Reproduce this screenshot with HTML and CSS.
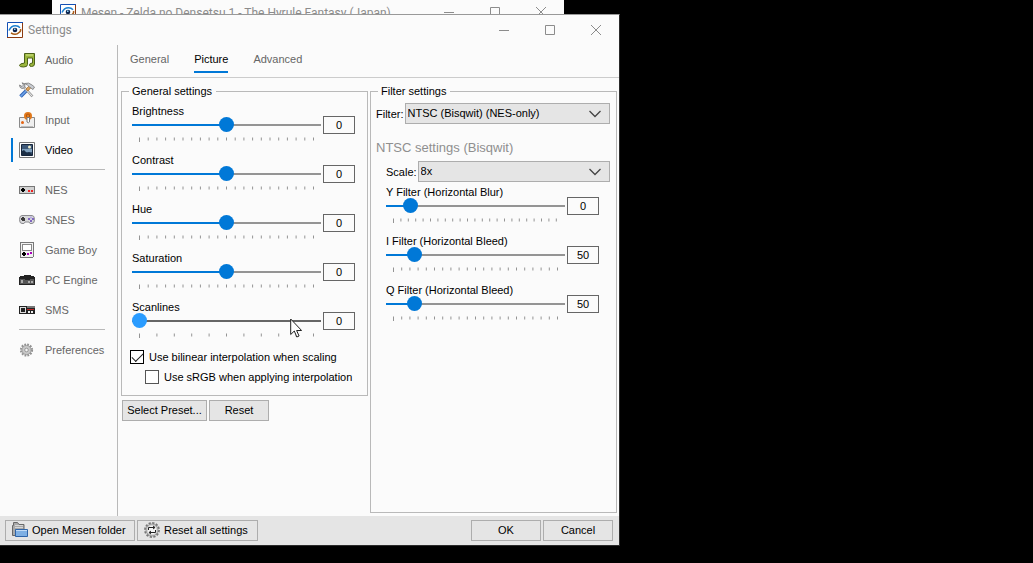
FILE: index.html
```html
<!DOCTYPE html>
<html lang="en">
<head>
<meta charset="utf-8">
<title>Settings</title>
<link rel="stylesheet" href="styles.css">
</head>
<body>
<svg class="defs" aria-hidden="true">
  <symbol id="eye" viewBox="0 0 16 16">
    <path fill="#fff" d="M0 0h16v16H0z"/>
    <path fill="none" stroke="#1450b4" d="M.5 16V.5H16"/>
    <path fill="none" stroke="#8c3a10" d="M0 15.500h15.500V1"/>
    <path fill="none" stroke="#1a7fd0" stroke-width="1.500" d="M2 8.500C3.500 5 6 3.800 8.500 3.800c2 0 3.500.8 4.500 2"/>
    <path fill="none" stroke="#a85a14" stroke-width="1.500" d="M4 11c3 1.800 6 1.600 8-.5C13.500 9.500 14 8.500 13.500 7"/>
    <circle cx="8" cy="8" r="2.300" fill="#0c2450"/>
    <path fill="#8ed3f8" d="M7 6.500h1.500V8H7z"/>
  </symbol>
  <symbol id="min" viewBox="0 0 10 10"><path stroke="currentColor" d="M0 5.500h10"/></symbol>
  <symbol id="max" viewBox="0 0 10 10"><path fill="none" stroke="currentColor" d="M.5.5h9v9h-9z"/></symbol>
  <symbol id="close" viewBox="0 0 10 10"><path stroke="currentColor" d="M0 0l10 10M10 0L0 10"/></symbol>
  <symbol id="chevron" viewBox="0 0 12 8"><path fill="none" stroke="#444" stroke-width="1.300" d="M.5 1L6 6.500 11.500 1"/></symbol>
</svg>

<div class="back-window" aria-hidden="true">
  <svg class="app-icon"><use href="#eye"/></svg>
  <span class="title">Mesen - Zelda no Densetsu 1 - The Hyrule Fantasy (Japan)</span>
  <span class="caption"><svg><use href="#min"/></svg><svg><use href="#max"/></svg><svg><use href="#close"/></svg></span>
</div>

<main class="dialog">
  <header class="titlebar">
    <svg class="app-icon"><use href="#eye"/></svg>
    <h1 class="title">Settings</h1>
    <div class="caption">
      <button aria-label="Minimize"><svg><use href="#min"/></svg></button>
      <button aria-label="Maximize"><svg><use href="#max"/></svg></button>
      <button aria-label="Close"><svg><use href="#close"/></svg></button>
    </div>
  </header>

  <div class="body">
    <nav class="sidebar">
      <a href="#audio"><svg viewBox="0 0 16 16"><path fill="#9ab53c" stroke="#4c611a" d="M5.500 1.500h10v10.500q0 2.500-3 2.500-2 0-2-1.500 0-2 3-2V6h-5v6.500q0 2.500-4 2.500-4 0-4-1.500 0-2 5-2.500z"/><path fill="none" stroke="#d3e58b" d="M7 3h7"/></svg>Audio</a>
      <a href="#emulation"><svg viewBox="0 0 16 16"><path stroke="#2f62b5" stroke-width="3.600" d="M1.500 14.500L8 8"/><path stroke="#6ea4e8" stroke-width="1.600" d="M1.500 14.500L8 8"/><path stroke="#9a9a9a" stroke-width="2.600" d="M4 4l9.500 10.500"/><path stroke="#efefef" d="M4 4l9.500 10.500"/><path fill="#d9a25c" stroke="#a8682a" stroke-width=".7" d="M7 7l4-4 1.500 2L9 9z"/><path fill="#c9ccd2" stroke="#777" stroke-width=".8" d="M5.500 1.500Q10 0 13 3l2.500 2-1.500 2.500L10.500 5Q9 3 5.500 1.500zM.5 3L3 4.500 4.500 3 3 .8Q6 1 6 4q-1 3-3 2.500Q.5 6 .5 3z"/></svg>Emulation</a>
      <a href="#input"><svg viewBox="0 0 16 16"><path fill="#efefef" stroke="#8a8a8a" d="M.5 5.500h15v10H.5z"/><path stroke="#bdbdbd" d="M2 14.500h12"/><circle cx="9" cy="4" r="4" fill="#e27a1c"/><path fill="none" stroke="#b4560c" d="M7.500 5Q6.500 2 9 2t1.500 3"/><path fill="#fff" stroke="#777" d="M8 5.500h2.500V10q-1 1.500-2.500 0z"/><circle cx="3.500" cy="10.500" r="1.500" fill="#e46414"/></svg>Input</a>
      <a href="#video" class="active" aria-current="page"><svg viewBox="0 0 16 16"><path fill="#fff" stroke="#777" d="M.5.5h15v15H.5z"/><path fill="#3d5878" stroke="#17263c" d="M2.500 2.500h11v11h-11z"/><path fill="#7fa0bd" d="M3 7h10v3H3z"/><path fill="#1b2e45" d="M3 13V9l2-1 3 3 2-1 3 2v1z"/><circle cx="10.500" cy="5" r="1.500" fill="#f4f2cf"/></svg>Video</a>
      <hr>
      <a href="#nes"><svg viewBox="0 0 16 16" shape-rendering="crispEdges"><path fill="#777" d="M0 4h16v8H0z"/><path fill="#d2d2d2" d="M1 5h14v6H1z"/><path d="M3 6h2v1h1v2H5v1H3V9H2V7h1z"/><path fill="#e22" d="M9 8h2v2H9zM12 8h2v2h-2z"/></svg>NES</a>
      <a href="#snes"><svg viewBox="0 0 16 16"><path fill="#d8d8da" stroke="#8b8b8f" d="M3 3.500h10q2.500 0 2.500 4t-2.500 4h-2L10 10H6l-1 1.500H3Q.5 11.500.5 7.500t2.500-4z"/><path fill="#3c3c3c" d="M3 5h2v1h1v3H3V8H2V6h1z"/><path fill="#8067c0" d="M9 6h2v2H9zM11 8h2v2h-2zM13 6h2v2h-2z"/><path fill="#b9aee0" d="M11 4.500h2v2h-2z"/></svg>SNES</a>
      <a href="#gameboy"><svg viewBox="0 0 16 16" shape-rendering="crispEdges"><path fill="#777" d="M1 0h14v14l-2 2H1z"/><path fill="#f2f2f2" d="M2 1h12v13l-1 1H2z"/><path fill="#888" d="M3 2h10v7H3z"/><path fill="#fff" d="M4 3h8v5H4z"/><path d="M4 10h2v1h1v2H6v1H4v-1H3v-2h1z"/><path fill="#a0b" d="M8 11h2v2H8zM11 10h2v2h-2z"/></svg>Game Boy</a>
      <a href="#pcengine"><svg viewBox="0 0 16 16" shape-rendering="crispEdges"><path fill="#222" d="M5 3h6l1 1h3l1 2v7H0V6l1-2h3z"/><path fill="#555" d="M1 7h4l2 1h3l2-1h3v5H1z"/><path fill="#aaa" d="M2 8h2v3H2zM9 9h2v2H9zM12 9h2v2h-2z"/></svg>PC Engine</a>
      <a href="#sms"><svg viewBox="0 0 16 16" shape-rendering="crispEdges"><path fill="#222" d="M0 4h16v8H0z"/><path fill="#ddd" d="M1 5h6v6H1z"/><path fill="#222" d="M2 6h4v4H2z"/><path fill="#777" d="M8 4h8v2H8z"/><path fill="#b22" d="M8 7h7v1H8z"/><path fill="#eee" d="M9 9h2v2H9zM12 9h2v2h-2z"/></svg>SMS</a>
      <hr>
      <a href="#preferences"><svg viewBox="0 0 16 16"><circle cx="7.500" cy="8" r="5.400" fill="none" stroke="#929292" stroke-width="2.400" stroke-dasharray="1.700 1.130"/><circle cx="7.500" cy="8" r="4.600" fill="#c8c8c8" stroke="#9b9b9b"/><circle cx="7.500" cy="8" r="1.800" fill="#f4f4f4" stroke="#999"/></svg>Preferences</a>
    </nav>

    <section class="content">
      <nav class="tabs">
        <a href="#general">General</a>
        <a href="#picture" class="active" aria-current="page">Picture</a>
        <a href="#advanced">Advanced</a>
      </nav>
      <div class="panels">
        <div class="panel">
          <fieldset>
            <legend>General settings</legend>
            <div class="sliders">
              <div class="slider" style="--pos:50%">
                <label for="brightness">Brightness</label>
                <input type="range" id="brightness" min="-100" max="100" value="0">
                <output for="brightness">0</output>
                <svg class="ticks"><line x1="0" x2="100%" y1="2" y2="2" stroke-width="3" stroke-dasharray="1 7.700"/><path d="M.5 1v4"/></svg>
              </div>
              <div class="slider" style="--pos:50%">
                <label for="contrast">Contrast</label>
                <input type="range" id="contrast" min="-100" max="100" value="0">
                <output for="contrast">0</output>
                <svg class="ticks"><line x1="0" x2="100%" y1="2" y2="2" stroke-width="3" stroke-dasharray="1 7.700"/><path d="M.5 1v4"/></svg>
              </div>
              <div class="slider" style="--pos:50%">
                <label for="hue">Hue</label>
                <input type="range" id="hue" min="-100" max="100" value="0">
                <output for="hue">0</output>
                <svg class="ticks"><line x1="0" x2="100%" y1="2" y2="2" stroke-width="3" stroke-dasharray="1 7.700"/><path d="M.5 1v4"/></svg>
              </div>
              <div class="slider" style="--pos:50%">
                <label for="saturation">Saturation</label>
                <input type="range" id="saturation" min="-100" max="100" value="0">
                <output for="saturation">0</output>
                <svg class="ticks"><line x1="0" x2="100%" y1="2" y2="2" stroke-width="3" stroke-dasharray="1 7.700"/><path d="M.5 1v4"/></svg>
              </div>
              <div class="slider hot" style="--pos:0%">
                <label for="scanlines">Scanlines</label>
                <input type="range" id="scanlines" min="0" max="100" value="0">
                <output for="scanlines">0</output>
                <svg class="ticks"><line x1="0" x2="100%" y1="2" y2="2" stroke-width="3" stroke-dasharray="1 16.400"/><path d="M.5 1v4"/></svg>
                <svg class="pointer" viewBox="0 0 12 20" aria-hidden="true"><path fill="#fff" stroke="#222" d="M.7 1v15.500l3.600-3.500 2.500 6 2.300-1-2.500-5.500h5z"/></svg>
              </div>
            </div>
            <label class="check"><input type="checkbox" checked>Use bilinear interpolation when scaling</label>
            <label class="check nested"><input type="checkbox">Use sRGB when applying interpolation</label>
          </fieldset>
          <div class="actions">
            <button class="btn preset">Select Preset...</button>
            <button class="btn reset">Reset</button>
          </div>
        </div>

        <fieldset class="filter">
          <legend>Filter settings</legend>
          <div class="field">
            <label for="filter">Filter:</label>
            <div class="select"><select id="filter"><option>NTSC (Bisqwit) (NES-only)</option></select><svg><use href="#chevron"/></svg></div>
          </div>
          <h2>NTSC settings (Bisqwit)</h2>
          <div class="field scale">
            <label for="scale">Scale:</label>
            <div class="select"><select id="scale"><option>8x</option></select><svg><use href="#chevron"/></svg></div>
          </div>
          <div class="sliders">
            <div class="slider" style="--pos:10.500%">
              <label for="yfilter">Y Filter (Horizontal Blur)</label>
              <input type="range" id="yfilter" min="-50" max="426" value="0">
              <output for="yfilter">0</output>
              <svg class="ticks"><line x1="0" x2="100%" y1="2" y2="2" stroke-width="3" stroke-dasharray="1 6.400"/><path d="M.5 1v4"/></svg>
            </div>
            <div class="slider" style="--pos:12.500%">
              <label for="ifilter">I Filter (Horizontal Bleed)</label>
              <input type="range" id="ifilter" min="0" max="400" value="50">
              <output for="ifilter">50</output>
              <svg class="ticks"><line x1="0" x2="100%" y1="2" y2="2" stroke-width="3" stroke-dasharray="1 7.200"/><path d="M.5 1v4"/></svg>
            </div>
            <div class="slider" style="--pos:12.500%">
              <label for="qfilter">Q Filter (Horizontal Bleed)</label>
              <input type="range" id="qfilter" min="0" max="400" value="50">
              <output for="qfilter">50</output>
              <svg class="ticks"><line x1="0" x2="100%" y1="2" y2="2" stroke-width="3" stroke-dasharray="1 7.200"/><path d="M.5 1v4"/></svg>
            </div>
          </div>
        </fieldset>
      </div>
    </section>
  </div>

  <footer class="footer">
    <button class="btn icon folder"><svg viewBox="0 0 16 16"><path fill="#a9a9a9" stroke="#686868" d="M.5 13.500v-10h1v-3h4l1.500 2h5v11z"/><path stroke="#d6d6d6" d="M3 3.500h8M3 5.500h8"/><path fill="#7fb0e4" stroke="#2f64a8" d="M3.500 7.500h12v7h-12z"/><path stroke="#c3dcf6" d="M4 8.500h11"/></svg>Open Mesen folder</button>
    <button class="btn icon all"><svg viewBox="0 0 16 16"><circle cx="8" cy="8" r="6.800" fill="none" stroke="#777" stroke-width="2.200" stroke-dasharray="2.200 1.360"/><circle cx="8" cy="8" r="6" fill="#d0d0d0" stroke="#999"/><circle cx="8" cy="8" r="4.300" fill="#f4f4f4"/><path fill="none" stroke="#222" d="M4.500 8V5.500h6M9 4l2 1.500L9 7M11.500 8v2.500h-6M7 9l-2 1.500L7 12"/></svg>Reset all settings</button>
    <span class="spacer"></span>
    <button class="btn wide">OK</button>
    <button class="btn wide">Cancel</button>
  </footer>
</main>
</body>
</html>
```
FILE: styles.css
```css
* { box-sizing: border-box; }

body {
  margin: 0;
  padding: 14px 413px 17px 0;
  min-height: 100vh;
  display: flex;
  background: #000;
  color: #000;
  font: 11px/14px "Liberation Sans", Arial, sans-serif;
}

button, input, select, output { font: inherit; color: inherit; }
a { color: inherit; text-decoration: none; }
.defs { position: absolute; width: 0; height: 0; }

/* windows */
.back-window {
  position: absolute;
  top: 0;
  left: 52px;
  right: 469px;
  height: 24px;
  padding: 4px 0 0 8px;
  display: flex;
  align-items: flex-start;
  background: #fbfbfb;
  color: #8c8c8c;
}
.back-window .caption svg { margin: 3px 18px 0; }

.dialog {
  position: relative;
  flex: 1;
  display: flex;
  flex-direction: column;
  background: #fbfbfb;
  border: solid #2a2a2a;
  border-width: 1px 1px 1px 0;
  border-top-color: #999;
}

.titlebar {
  display: flex;
  align-items: center;
  height: 30px;
  padding-left: 7px;
  color: #8c8c8c;
}
.app-icon { width: 16px; height: 16px; flex: none; }
.title {
  margin: 0 auto 0 5px;
  font: 12px/18px Roboto, sans-serif;
  white-space: nowrap;
}
.caption { display: flex; }
.caption svg { width: 10px; height: 10px; flex: none; }
.caption button {
  display: flex;
  align-items: center;
  justify-content: center;
  width: 46px;
  height: 28px;
  padding: 0;
  border: 0;
  background: none;
}

.body { flex: 1; display: flex; }

/* sidebar */
.sidebar {
  width: 118px;
  border-right: 1px solid #b9b9b9;
  color: #666;
}
.sidebar a {
  display: flex;
  align-items: center;
  gap: 10px;
  height: 24px;
  margin: 3px 0 6px 11px;
  padding-left: 6px;
  border-left: 2px solid transparent;
}
.sidebar svg { width: 16px; height: 16px; flex: none; }
.sidebar .active { border-color: #0078d7; color: #000; }
.sidebar hr {
  height: 1px;
  margin: 7px 12px 8px 19px;
  border: 0;
  background: #b9b9b9;
}

/* tabs */
.content { flex: 1; display: flex; flex-direction: column; min-width: 0; }
.tabs {
  display: flex;
  gap: 25px;
  height: 33px;
  padding: 7px 12px 0;
  border-bottom: 1px solid #ccc;
  color: #666;
}
.tabs a { height: 21px; border-bottom: 2px solid transparent; }
.tabs .active { border-color: #0078d7; color: #000; }

/* panels */
.panels {
  flex: 1;
  display: grid;
  grid-template-columns: 1fr 1fr;
  gap: 2px;
  padding: 6px 2px 3px 3px;
}
fieldset {
  min-width: 0;
  margin: 0;
  padding: 6px 12px 8px 10px;
  border: 1px solid #b9b9b9;
}
legend { padding: 0 4px 0 3px; margin-left: -3px; }

.sliders { display: grid; gap: 2px; }
.slider {
  position: relative;
  display: grid;
  grid-template: 12px 18px 17px / 1fr 32px;
  column-gap: 2px;
  --fill: #0078d7;
  --rail: #949494;
}
.slider.hot { --fill: #2a9cff; --rail: #666; }
.slider label { grid-column: 1 / 3; white-space: nowrap; }
.slider input {
  appearance: none;
  width: 100%;
  height: 15px;
  margin: 1px 0 0;
  background: linear-gradient(to right, var(--fill) var(--pos), var(--rail) var(--pos)) center / 100% 2px no-repeat;
}
.slider input::-webkit-slider-thumb {
  appearance: none;
  width: 15px;
  height: 15px;
  border-radius: 50%;
  background: var(--fill);
}
.slider output {
  border: 1px solid #666;
  line-height: 16px;
  text-align: center;
}
.ticks {
  width: calc(100% - 14px);
  height: 5px;
  margin: 3px 7px 0;
  stroke: #949494;
}
.pointer {
  position: absolute;
  right: 53px;
  top: 18px;
  width: 12px;
  height: 20px;
}

.check {
  display: flex;
  align-items: center;
  gap: 5px;
  height: 20px;
  margin-left: -2px;
  white-space: nowrap;
}
.check.nested { margin-left: 13px; }
.check input {
  appearance: none;
  width: 14px;
  height: 14px;
  margin: 0;
  border: 1px solid #555;
  background: #fff;
}
.check input:checked { display: grid; border-color: #000; }
.check input:checked::before {
  content: "";
  width: 10px;
  height: 5px;
  margin: 2px 1px;
  border: solid #222;
  border-width: 0 0 1px 1px;
  rotate: -45deg;
}

.actions { display: flex; gap: 2px; padding: 4px 1px; }
.btn {
  height: 21px;
  padding: 0 0 1px;
  border: 1px solid #adadad;
  background: #e5e5e5;
  white-space: nowrap;
}
.preset { width: 85px; }
.reset { width: 60px; }
.wide { width: 70px; }
.icon { display: flex; align-items: center; gap: 4px; padding-left: 6px; }
.icon svg { width: 16px; height: 16px; flex: none; }
.folder { width: 130px; }
.all { width: 121px; }

/* filter panel */
.filter { padding: 5px 6px 0 5px; }
.filter legend { margin-left: 2px; }
.field { display: flex; align-items: center; gap: 1px; }
.field.scale { padding-left: 10px; }
.select { position: relative; flex: 1; }
.select select {
  display: block;
  appearance: none;
  width: 100%;
  height: 21px;
  padding: 0 2px 1px;
  border: 1px solid #adadad;
  border-radius: 0;
  background: #e5e5e5;
}
.select svg {
  position: absolute;
  right: 9px;
  top: 7px;
  width: 12px;
  height: 8px;
  pointer-events: none;
}
.filter h2 {
  margin: 16px 0 5px;
  color: #8f8f8f;
  font-size: 13px;
  font-weight: normal;
  line-height: 16px;
}
.filter .sliders { padding: 3px 11px 0 10px; }

.footer {
  display: flex;
  gap: 2px;
  padding: 4px 6px 4px 5px;
  background: #e5e5e5;
}
.spacer { flex: 1; }
```
